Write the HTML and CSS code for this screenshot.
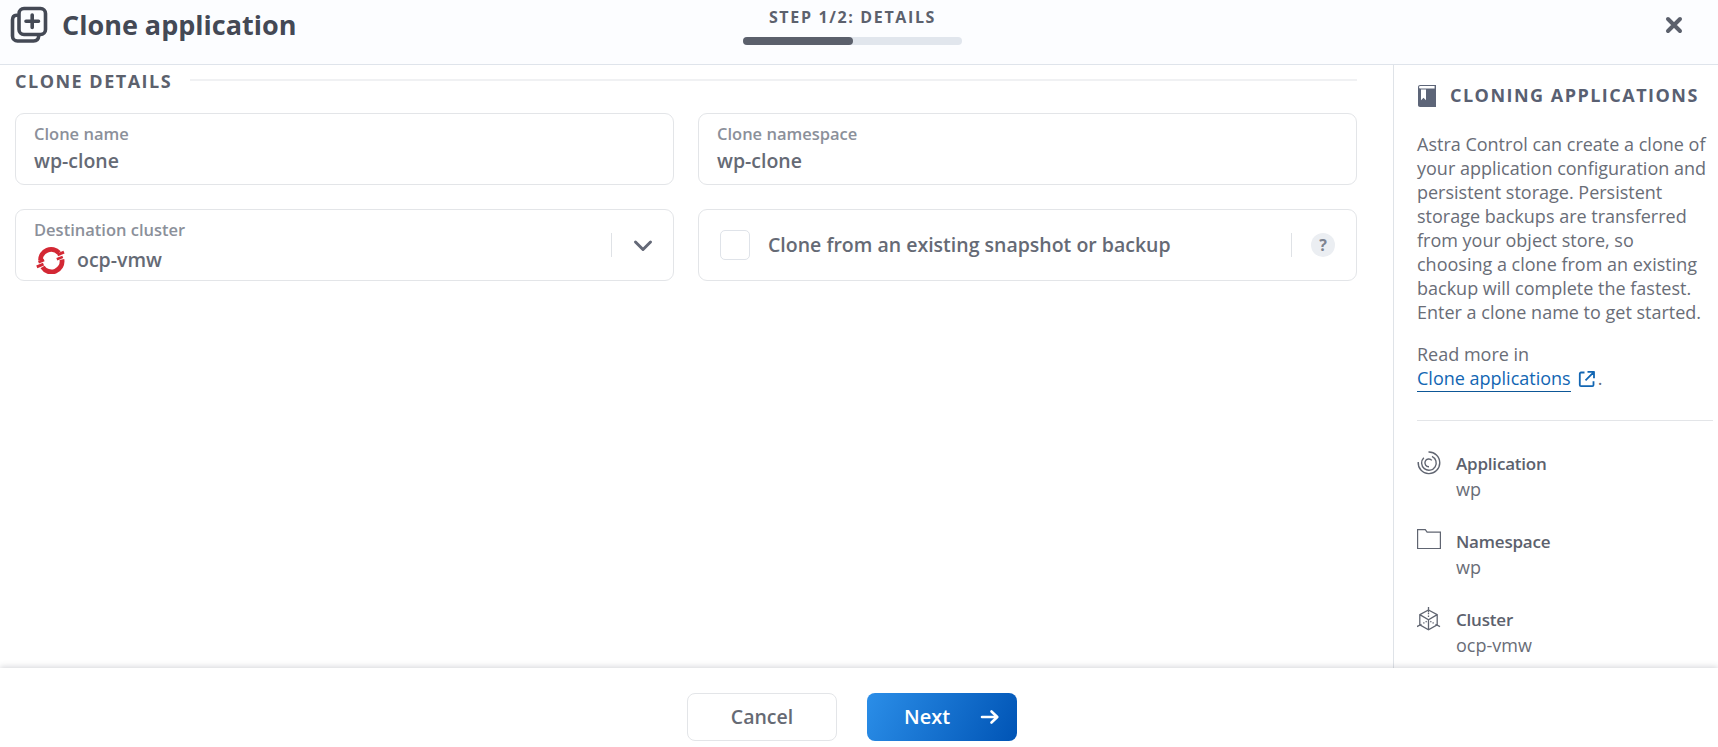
FILE: index.html
```html
<!DOCTYPE html>
<html lang="en">
<head>
<meta charset="utf-8">
<title>Clone application</title>
<link rel="stylesheet" href="styles.css">
</head>
<body>
<div class="page">
  <header class="header">
    <div class="brand">
      <svg class="brand-icon" width="38" height="38" viewBox="0 0 38 38" fill="none" stroke="#444955" stroke-width="3.6" stroke-linecap="round" stroke-linejoin="round">
        <rect x="9" y="2.500" width="26.5" height="26" rx="5"/>
        <path d="M6.500 9.300C3.800 9.500 2.500 11.300 2.500 14.100V30a5 5 0 0 0 5 5H23.500c3 0 5-2 5.200-5"/>
        <path d="M22.200 9v12.500M16 15.300h12.500"/>
      </svg>
      <h1 class="title">Clone application</h1>
    </div>
    <div class="step">
      <span class="step-label">STEP 1/2: DETAILS</span>
      <div class="progress"><div class="progress-value"></div></div>
    </div>
    <button class="close" aria-label="Close">
      <svg width="18" height="18" viewBox="0 0 18 18" stroke="#5b606c" stroke-width="4" stroke-linecap="round"><path d="M3 3l12 12M15 3L3 15"/></svg>
    </button>
  </header>
  <div class="body">
    <main class="main">
      <div class="section"><h2 class="section-title">CLONE DETAILS</h2><div class="section-line"></div></div>
      <div class="grid">
        <div class="field"><span class="label">Clone name</span><span class="value">wp-clone</span></div>
        <div class="field"><span class="label">Clone namespace</span><span class="value">wp-clone</span></div>
        <div class="field row">
          <div class="select">
            <span class="label">Destination cluster</span>
            <div class="cluster">
              <svg width="29" height="28" viewBox="0 0 29 28" fill="none" stroke="#d32834" stroke-width="4.800">
                <path d="M4.600 14.500A10.600 10.600 0 0 1 23 6.800"/>
                <path d="M25.900 13.500A10.600 10.600 0 0 1 6.500 21"/>
                <path d="M21.500 8.800L28 6.200M.8 20.800L7.500 18.200" stroke-width="3"/>
                <path d="M20.800 13.300l6-2.400M2.500 16.200l5.600-2.200" stroke-width="2.600"/>
              </svg>
              <span class="value">ocp-vmw</span>
            </div>
          </div>
          <div class="divider"></div>
          <svg class="chevron" width="20" height="14" viewBox="0 0 20 14" fill="none" stroke="#646977" stroke-width="3" stroke-linecap="round" stroke-linejoin="round"><path d="M2.500 3L10 10.500 17.500 3"/></svg>
        </div>
        <div class="field row">
          <span class="checkbox"></span>
          <span class="value check-label">Clone from an existing snapshot or backup</span>
          <div class="divider"></div>
          <span class="help">?</span>
        </div>
      </div>
    </main>
    <aside class="aside">
      <div class="aside-head">
        <svg width="20" height="24" viewBox="0 0 20 24">
          <path d="M1 3.200C1 1.800 1.900 1 3.200 1H19v22H3c-1.200 0-2-.8-2-2z" fill="#5d6578"/>
          <path d="M3.300 2H17.600v2.600H3.300a1.300 1.300 0 0 1 0-2.600z" fill="#fff"/>
          <path d="M4 5.500h5v10.800l-2.500-2.500L4 16.300z" fill="#fff"/>
        </svg>
        <h2 class="aside-title">CLONING APPLICATIONS</h2>
      </div>
      <p class="text">Astra Control can create a clone of<br>your application configuration and<br>persistent storage. Persistent<br>storage backups are transferred<br>from your object store, so<br>choosing a clone from an existing<br>backup will complete the fastest.<br>Enter a clone name to get started.</p>
      <p class="text more">Read more in<br><a class="link" href="#">Clone applications</a><svg class="ext" width="18" height="18" viewBox="0 0 18 18" fill="none" stroke="#1266b3" stroke-width="1.800" stroke-linejoin="round"><path d="M6.500 2.500H3a1.200 1.200 0 0 0-1.200 1.200V15A1.200 1.200 0 0 0 3 16.200h11.300a1.200 1.200 0 0 0 1.200-1.200v-3.700M9.500 1.800H16v6.500M16 1.800L7.500 10.300"/></svg>.</p>
      <hr class="rule">
      <dl class="facts">
        <div class="fact">
          <svg width="24" height="24" viewBox="0 0 24 24" fill="none" stroke="#606571" stroke-width="1.400">
            <path d="M11.500 1A10.800 10.800 0 1 1 1.200 11"/>
            <path d="M15 5.300A7.300 7.300 0 1 1 6.800 6.700"/>
            <path d="M14.800 9.400A3.900 3.900 0 1 0 12 15.800"/>
          </svg>
          <div><dt>Application</dt><dd>wp</dd></div>
        </div>
        <div class="fact">
          <svg class="folder" width="24" height="24" viewBox="0 0 24 24" fill="none" stroke="#606571" stroke-width="1.200"><path d="M.6 19.500V.6h7.700l1.800 2.600h13.300v16.300z"/></svg>
          <div><dt>Namespace</dt><dd>wp</dd></div>
        </div>
        <div class="fact">
          <svg width="24" height="24" viewBox="0 0 24 24" fill="none" stroke="#606571" stroke-width="1.300">
            <path d="M11.500 3l8.700 4.600v10.200l-8.700 5-8.700-5V7.600zM2.800 7.600l8.700 5.200 8.700-5.200M11.500 12.800v10"/>
            <path d="M11.500 0v5.500M0 19.600l4.500-2.400M23 19.600l-4.500-2.400"/><path d="M11.500 6v4M6.300 16.200l3.500-1.900M16.700 16.200l-3.500-1.900" stroke-dasharray="1.300 1.300"/>
          </svg>
          <div><dt>Cluster</dt><dd>ocp-vmw</dd></div>
        </div>
      </dl>
    </aside>
  </div>
  <footer class="footer">
    <button class="btn cancel">Cancel</button>
    <button class="btn next"><span>Next</span>
      <svg width="20" height="16" viewBox="0 0 20 16" fill="none" stroke="#fff" stroke-width="2.600" stroke-linecap="round" stroke-linejoin="round"><path d="M2 8h15M11.500 2.500L17.300 8l-5.800 5.500"/></svg>
    </button>
  </footer>
</div>
</body>
</html>
```

FILE: styles.css
```css
* { box-sizing: border-box; }
body { margin: 0; font-family: "Open Sans", "Noto Sans", sans-serif; color: #5c616d; background: #fff; }
h1, h2, p, dl, dd { margin: 0; }
button { font: inherit; padding: 0; cursor: pointer; }
svg { display: block; flex: none; }
.page { width: 1718px; height: 747px; display: flex; flex-direction: column; overflow: hidden; }

.header { height: 65px; flex: none; display: grid; grid-template-columns: 743px 219px 1fr; background: #fcfdff; border-bottom: 1px solid #dfe4eb; }
.brand { display: flex; align-items: flex-start; padding: 6px 0 0 10px; gap: 14px; }
.title { font-size: 27px; font-weight: 700; line-height: 38px; color: #444955; white-space: nowrap; }
.step { display: flex; flex-direction: column; align-items: center; padding-top: 6px; }
.step-label { font-size: 16px; font-weight: 700; line-height: 22px; letter-spacing: 1.650px; white-space: nowrap; }
.progress { width: 219px; height: 8px; margin-top: 9px; border-radius: 4px; background: #e1e6ed; }
.progress-value { width: 110px; height: 8px; border-radius: 4px; background: #5b606c; }
.close { justify-self: end; align-self: start; margin: 16px 35px 0 0; border: 0; background: none; }

.body { height: 603px; flex: none; display: flex; }
.main { width: 1393px; padding: 4px 36px 0 15px; }
.section { display: flex; align-items: center; height: 24px; gap: 18px; }
.section-title { font-size: 18px; font-weight: 700; letter-spacing: 1.500px; line-height: 24px; white-space: nowrap; }
.section-line { flex: 1; height: 2px; margin-top: -2px; background: #f0f1f3; }
.grid { display: grid; grid-template-columns: 659px 659px; gap: 24px; margin-top: 20px; }
.field { height: 72px; border: 1px solid #e3e5e8; border-radius: 9px; padding: 8px 18px 0; display: flex; flex-direction: column; }
.row { flex-direction: row; align-items: center; padding-top: 0; }
.label { font-size: 16.500px; font-weight: 600; line-height: 24px; color: #8b909a; }
.value { font-size: 19.500px; font-weight: 600; line-height: 30px; color: #656a75; }
.select { flex: 1; display: flex; flex-direction: column; padding-top: 5px; }
.cluster { display: flex; align-items: center; gap: 12px; height: 36px; }
.cluster svg { margin-left: 2px; }
.divider { width: 1px; height: 24px; background: #dfe2e6; }
.chevron { margin: 1px 2px 0 21px; }
.checkbox { width: 30px; height: 30px; margin-left: 3px; border: 1px solid #dfe3e9; border-radius: 5px; }
.check-label { flex: 1; margin-left: 18px; }
.help { width: 24px; height: 24px; margin: 0 3px 0 19px; border-radius: 50%; background: #ebeef2; color: #7d8390; font-size: 16px; font-weight: 700; line-height: 24px; text-align: center; }

.aside { flex: 1; border-left: 1px solid #dfe3e8; padding: 18px 5px 0 23px; }
.aside-head { display: flex; align-items: center; gap: 13px; height: 26px; }
.aside-title { font-size: 18px; font-weight: 700; line-height: 24px; margin-top: -2px; letter-spacing: 1.480px; white-space: nowrap; color: #596072; }
.text { font-size: 18px; line-height: 24px; margin-top: 23px; white-space: nowrap; color: #696d77; }
.more { margin-top: 18px; }
.link { color: #1266b3; text-decoration: none; border-bottom: 1px solid #0d5797; padding-bottom: 1px; }
.ext { display: inline-block; vertical-align: -3px; margin: 0 2px 0 7px; }
.rule { margin: 30px 0 0; border: 0; height: 1px; background: #e3e5e8; }
.facts { padding-top: 30px; display: flex; flex-direction: column; gap: 26px; }
.fact { display: flex; gap: 15px; height: 52px; }
dt { font-size: 17px; font-weight: 600; line-height: 26px; letter-spacing: -.2px; }
dd { font-size: 18px; line-height: 26px; margin-top: -1px; color: #696d77; }

.footer { flex: 1; display: flex; justify-content: center; gap: 30px; padding: 25px 14px 0 0; background: #fff; position: relative; box-shadow: 0 -1px 6px rgba(70, 75, 90, .24); }
.btn { width: 150px; height: 48px; border-radius: 8px; font-size: 19.500px; padding-bottom: 1px; }
.cancel { border: 1px solid #e3e5e8; background: #fff; color: #666a74; font-weight: 600; }
.next { border: 0; color: #fff; font-size: 20px; font-weight: 600; display: flex; align-items: center; padding: 0 17px 1px 37px; justify-content: space-between; background: linear-gradient(115deg, #2b8ee8, #0054b5); }
```
